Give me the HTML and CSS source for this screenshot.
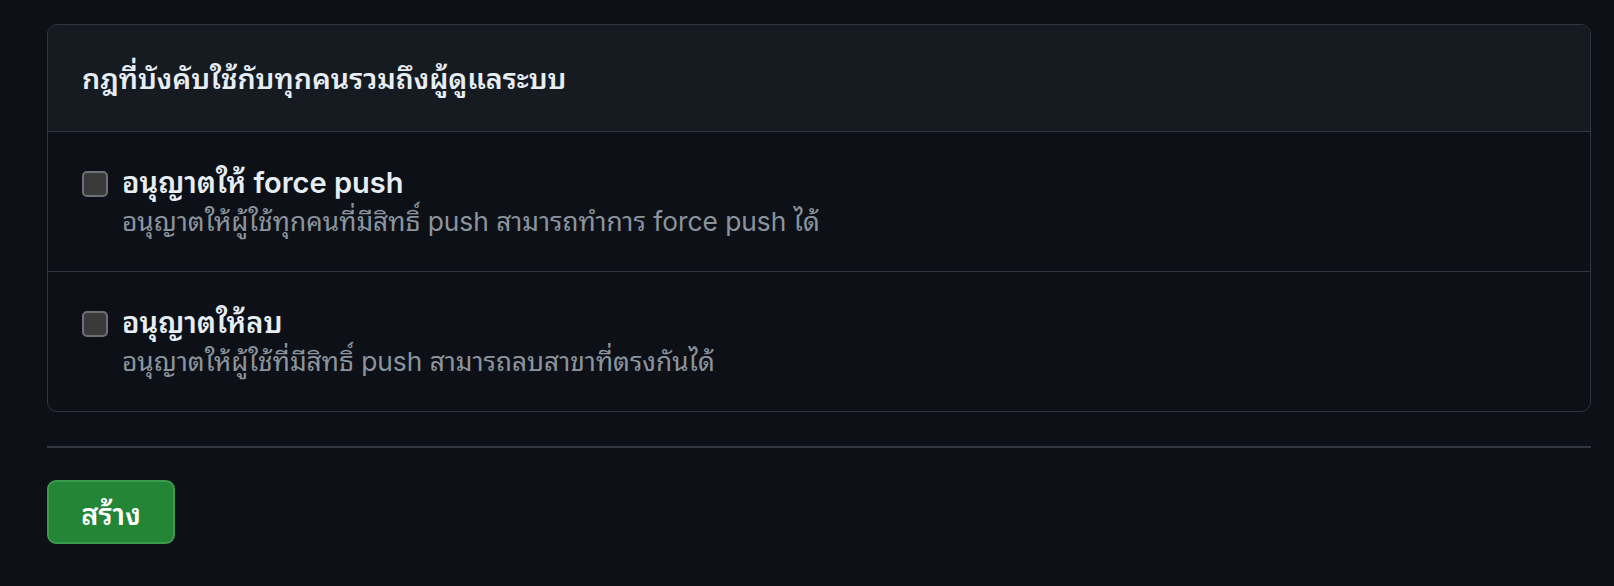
FILE: index.html
```html
<!DOCTYPE html>
<html lang="th">
<head>
  <meta charset="UTF-8">
  <meta name="viewport" content="width=device-width, initial-scale=1.0">
  <title>กฎของสาขา</title>
  <link rel="stylesheet" href="styles.css">
</head>
<body>
  <div class="page">
    <form>
      <!-- Rules for everyone -->
      <div class="box">
        <div class="box-header">
          <h2>กฎที่บังคับใช้กับทุกคนรวมถึงผู้ดูแลระบบ</h2>
        </div>

        <div class="box-row">
          <input type="checkbox" id="allow_force_push" class="check">
          <div class="row-text">
            <label for="allow_force_push">อนุญาตให้ force push</label>
            <p class="note">อนุญาตให้ผู้ใช้ทุกคนที่มีสิทธิ์ push สามารถทำการ force push ได้</p>
          </div>
        </div>

        <div class="box-row">
          <input type="checkbox" id="allow_deletions" class="check">
          <div class="row-text">
            <label for="allow_deletions">อนุญาตให้ลบ</label>
            <p class="note">อนุญาตให้ผู้ใช้ที่มีสิทธิ์ push สามารถลบสาขาที่ตรงกันได้</p>
          </div>
        </div>
      </div>

      <hr class="divider">

      <button type="submit" class="btn-primary">สร้าง</button>
    </form>
  </div>
</body>
</html>
```

FILE: styles.css
```css
/* General Styling */
html {
  font-family: Inter, "Noto Sans Thai Looped", "Noto Sans Thai", "Noto Sans", Loma, Garuda, sans-serif;
  background: #0d1117;
  color: #e6edf3;
}
body {
  margin: 0;
}
.page {
  padding: 24px 23px 0 47px;
}

/* Rules box */
.box {
  border: 1px solid #30363d;
  border-radius: 10px;
  overflow: hidden;
}
.box-header {
  background: #161b22;
  padding: 34px 34px 32px;
  border-bottom: 1px solid #30363d;
}
.box-header h2 {
  margin: 0;
  font-size: 28.6px;
  font-weight: 600;
  line-height: 40px;
  color: #e6edf3;
}
.box-row {
  display: flex;
  align-items: flex-start;
  gap: 14px;
  padding: 31px 34px 30px;
}
.box-row + .box-row {
  border-top: 1px solid #30363d;
}
.check {
  appearance: none;
  -webkit-appearance: none;
  flex: 0 0 auto;
  width: 26px;
  height: 26px;
  margin: 8px 0 0;
  background: #3a3a3c;
  border: 2px solid #6e7076;
  border-radius: 5px;
  box-sizing: border-box;
  cursor: pointer;
}
.row-text label {
  display: block;
  font-size: 29px;
  font-weight: 600;
  line-height: 40px;
  color: #e6edf3;
  cursor: pointer;
}
.row-text .note {
  margin: 0;
  font-size: 26.3px;
  line-height: 38px;
  color: #8b949e;
}

/* Bottom controls */
.divider {
  margin: 34px 0 32px;
  border: none;
  border-top: 2px solid #30363d;
}
.btn-primary {
  width: 128px;
  height: 64px;
  font-family: inherit;
  font-size: 29px;
  font-weight: 600;
  color: #fff;
  background: #238636;
  border: 2px solid #3c9a4b;
  border-radius: 9px;
  cursor: pointer;
}
.btn-primary:hover {
  background: #2ea043;
}
```
